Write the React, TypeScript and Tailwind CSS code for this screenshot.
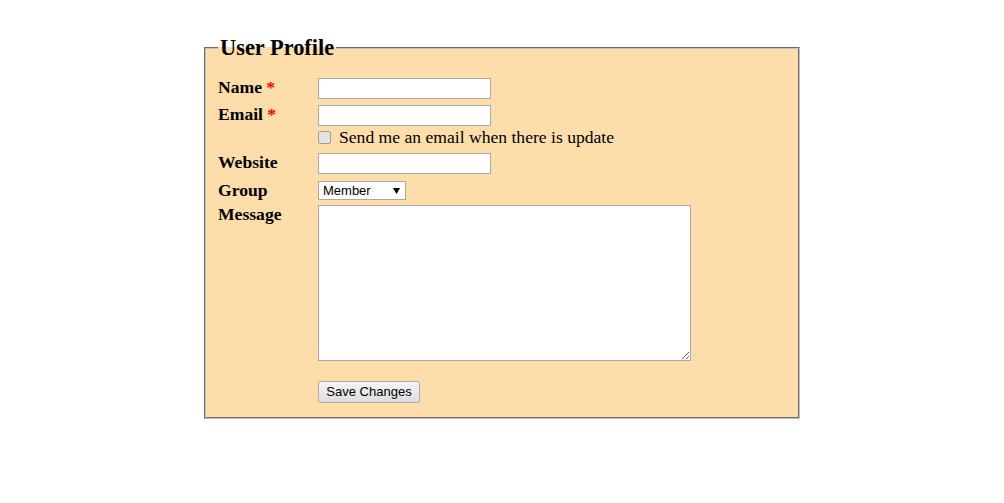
import React from "react";

function Label({ children, req }: { children: React.ReactNode; req?: boolean }) {
  return (
    <div className="w-[100px] shrink-0 font-bold text-[17.6px] leading-[18px] text-black">
      {children}
      {req && <span className="text-[#ff0000]"> *</span>}
    </div>
  );
}

function TextInput() {
  return (
    <input
      type="text"
      className="block w-[173px] h-[21px] bg-white border border-[#a9a9a9] px-[2px] font-['Liberation_Sans',Arial,sans-serif] text-[13px] outline-none"
    />
  );
}

export default function App() {
  return (
    <div className="w-[1004px] h-[503px] bg-white pt-[35px] font-['Liberation_Serif','Times_New_Roman',serif] text-black">
      <fieldset className="mx-auto w-[596px] border-2 [border-style:groove] border-[#c0c0c0] bg-[#fddeab] px-[12px] pb-[14px]">
        <legend className="py-0 px-[2px] font-bold text-[22.4px] leading-[26px]">User Profile</legend>
        <div className="pt-[17px] flex flex-col">
          <div className="flex items-start">
            <Label req>Name</Label>
            <TextInput />
          </div>
          <div className="flex items-start mt-[6px]">
            <Label req>Email</Label>
            <div className="flex flex-col">
              <TextInput />
              <label className="flex items-center h-[21px] text-[17.6px] leading-[20px]">
                <span className="block w-[13px] h-[13px] rounded-[2px] border border-[#9c9c9c] bg-[#e3e3e3] mr-[8px] mt-[1px]" />
                Send me an email when there is update
              </label>
            </div>
          </div>
          <div className="flex items-start mt-[6px]">
            <Label>Website</Label>
            <TextInput />
          </div>
          <div className="flex items-start mt-[7px]">
            <Label>Group</Label>
            <div className="relative w-[88px] h-[19px] bg-white border border-[#a9a9a9] font-['Liberation_Sans',Arial,sans-serif] text-[13px] leading-[17px] pl-[4px] text-black">
              Member
              <svg className="absolute right-[5px] top-[6px]" width="7" height="6" viewBox="0 0 7 6">
                <path d="M0 0 H7 L3.5 6 Z" fill="#000" />
              </svg>
            </div>
          </div>
          <div className="flex items-start mt-[5px]">
            <Label>Message</Label>
            <textarea className="block w-[373px] h-[156px] bg-white border border-[#a9a9a9] outline-none" />
          </div>
          <div className="flex items-start mt-[20px]">
            <div className="w-[100px] shrink-0" />
            <button className="w-[102px] h-[22px] border border-[#adadad] rounded-[2px] bg-gradient-to-b from-[#f4f4f4] to-[#dedede] font-['Liberation_Sans',Arial,sans-serif] text-[13px] leading-[18px] text-black">
              Save Changes
            </button>
          </div>
        </div>
      </fieldset>
    </div>
  );
}
